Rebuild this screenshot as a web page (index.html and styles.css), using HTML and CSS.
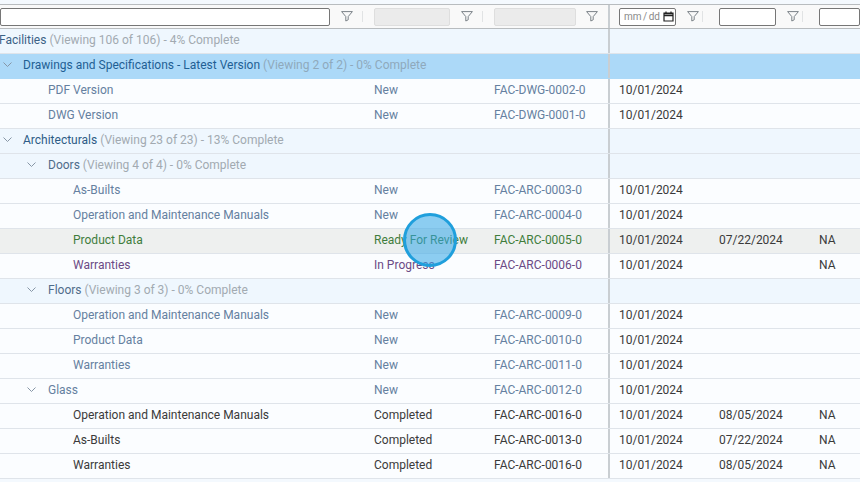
FILE: index.html
```html
<!DOCTYPE html>
<html lang="en">
<head>
<meta charset="utf-8">
<title>Facilities</title>
<link rel="stylesheet" href="styles.css">
</head>
<body>
<svg class="sprites" width="0" height="0" aria-hidden="true">
  <symbol id="funnel" viewBox="0 0 12 11"><path d="M.6.6h10.8L7.2 5.6v3.2L4.8 10V5.6z" fill="none" stroke="#7b8288" stroke-width="1"/></symbol>
  <symbol id="chev" viewBox="0 0 9 5"><path d="M.5.5l4 4 4-4" fill="none" stroke="#8796a6" stroke-width="1"/></symbol>
</svg>
<main class="grid">
  <div class="row filters">
    <div class="fcell c-name"><input class="finput w-name" type="text"><svg class="fn"><use href="#funnel"/></svg><i class="sep"></i></div>
    <div class="fcell c-st"><input class="finput off w-st" type="text" disabled><svg class="fn"><use href="#funnel"/></svg><i class="sep"></i></div>
    <div class="fcell c-doc"><input class="finput off w-doc" type="text" disabled><svg class="fn"><use href="#funnel"/></svg></div>
    <div class="fcell c-date divider"><span class="finput w-date datebox"><span class="mask">mm / dd</span><svg class="cal" viewBox="0 0 11 11"><path d="M1 2h9v8H1zM1 3h9v1.6H1zM3 .5v2M8 .5v2" fill="none" stroke="#222" stroke-width="1.2"/></svg></span><svg class="fn"><use href="#funnel"/></svg><i class="sep"></i></div>
    <div class="fcell c-x"><input class="finput w-x" type="text"><svg class="fn"><use href="#funnel"/></svg><i class="sep"></i></div>
    <div class="fcell c-y"><input class="finput w-y" type="text"></div>
  </div>

  <div class="row group l0"><div class="c-name"><span class="t">Facilities</span> <span class="m">(Viewing 106 of 106) - 4% Complete</span></div><div class="c-st"></div><div class="c-doc"></div><div class="c-date divider"></div><div class="c-x"></div><div class="c-y"></div></div>
  <div class="row group sel l1"><div class="c-name"><svg class="ch"><use href="#chev"/></svg><span class="t">Drawings and Specifications - Latest Version</span> <span class="m">(Viewing 2 of 2) - 0% Complete</span></div><div class="c-st"></div><div class="c-doc"></div><div class="c-date divider"></div><div class="c-x"></div><div class="c-y"></div></div>
  <div class="row leaf new l2"><div class="c-name">PDF Version</div><div class="c-st">New</div><div class="c-doc">FAC-DWG-0002-0</div><div class="c-date divider">10/01/2024</div><div class="c-x"></div><div class="c-y"></div></div>
  <div class="row leaf new l2"><div class="c-name">DWG Version</div><div class="c-st">New</div><div class="c-doc">FAC-DWG-0001-0</div><div class="c-date divider">10/01/2024</div><div class="c-x"></div><div class="c-y"></div></div>

  <div class="row group l1"><div class="c-name"><svg class="ch"><use href="#chev"/></svg><span class="t">Architecturals</span> <span class="m">(Viewing 23 of 23) - 13% Complete</span></div><div class="c-st"></div><div class="c-doc"></div><div class="c-date divider"></div><div class="c-x"></div><div class="c-y"></div></div>
  <div class="row group sub l2"><div class="c-name"><svg class="ch"><use href="#chev"/></svg><span class="t">Doors</span> <span class="m">(Viewing 4 of 4) - 0% Complete</span></div><div class="c-st"></div><div class="c-doc"></div><div class="c-date divider"></div><div class="c-x"></div><div class="c-y"></div></div>
  <div class="row leaf new l3"><div class="c-name">As-Builts</div><div class="c-st">New</div><div class="c-doc">FAC-ARC-0003-0</div><div class="c-date divider">10/01/2024</div><div class="c-x"></div><div class="c-y"></div></div>
  <div class="row leaf new l3"><div class="c-name">Operation and Maintenance Manuals</div><div class="c-st">New</div><div class="c-doc">FAC-ARC-0004-0</div><div class="c-date divider">10/01/2024</div><div class="c-x"></div><div class="c-y"></div></div>
  <div class="row leaf ready l3"><div class="c-name">Product Data</div><div class="c-st">Ready For Review</div><div class="c-doc">FAC-ARC-0005-0</div><div class="c-date divider">10/01/2024</div><div class="c-x">07/22/2024</div><div class="c-y">NA</div></div>
  <div class="row leaf prog l3"><div class="c-name">Warranties</div><div class="c-st">In Progress</div><div class="c-doc">FAC-ARC-0006-0</div><div class="c-date divider">10/01/2024</div><div class="c-x"></div><div class="c-y">NA</div></div>

  <div class="row group sub l2"><div class="c-name"><svg class="ch"><use href="#chev"/></svg><span class="t">Floors</span> <span class="m">(Viewing 3 of 3) - 0% Complete</span></div><div class="c-st"></div><div class="c-doc"></div><div class="c-date divider"></div><div class="c-x"></div><div class="c-y"></div></div>
  <div class="row leaf new l3"><div class="c-name">Operation and Maintenance Manuals</div><div class="c-st">New</div><div class="c-doc">FAC-ARC-0009-0</div><div class="c-date divider">10/01/2024</div><div class="c-x"></div><div class="c-y"></div></div>
  <div class="row leaf new l3"><div class="c-name">Product Data</div><div class="c-st">New</div><div class="c-doc">FAC-ARC-0010-0</div><div class="c-date divider">10/01/2024</div><div class="c-x"></div><div class="c-y"></div></div>
  <div class="row leaf new l3"><div class="c-name">Warranties</div><div class="c-st">New</div><div class="c-doc">FAC-ARC-0011-0</div><div class="c-date divider">10/01/2024</div><div class="c-x"></div><div class="c-y"></div></div>

  <div class="row leaf new l2 glass"><div class="c-name"><svg class="ch"><use href="#chev"/></svg>Glass</div><div class="c-st">New</div><div class="c-doc">FAC-ARC-0012-0</div><div class="c-date divider">10/01/2024</div><div class="c-x"></div><div class="c-y"></div></div>
  <div class="row leaf done l3"><div class="c-name">Operation and Maintenance Manuals</div><div class="c-st">Completed</div><div class="c-doc">FAC-ARC-0016-0</div><div class="c-date divider">10/01/2024</div><div class="c-x">08/05/2024</div><div class="c-y">NA</div></div>
  <div class="row leaf done l3"><div class="c-name">As-Builts</div><div class="c-st">Completed</div><div class="c-doc">FAC-ARC-0013-0</div><div class="c-date divider">10/01/2024</div><div class="c-x">07/22/2024</div><div class="c-y">NA</div></div>
  <div class="row leaf done l3"><div class="c-name">Warranties</div><div class="c-st">Completed</div><div class="c-doc">FAC-ARC-0016-0</div><div class="c-date divider">10/01/2024</div><div class="c-x">08/05/2024</div><div class="c-y">NA</div></div>
</main>
<div class="pointer"></div>
</body>
</html>
```
FILE: styles.css
```css
html, body { margin: 0; padding: 0; }
body {
  width: 860px;
  height: 482px;
  overflow: hidden;
  background: #f4f9fe;
  font-family: Roboto, "Liberation Sans", sans-serif;
  font-size: 12px;
  position: relative;
}
.sprites { position: absolute; }
.grid { padding-top: 4px; height: 478px; overflow: hidden; }
.row {
  display: grid;
  grid-template-columns: 369px 120px 119px 101px 100px 51px;
  width: 860px;
  height: 25px;
  box-sizing: border-box;
  border-bottom: 1px solid #dfe4ea;
  line-height: 22px;
}
.row > div { box-sizing: border-box; white-space: nowrap; }
.c-st, .c-doc { padding-left: 5px; }
.c-date, .c-x, .c-y { padding-left: 10px; }
.divider { border-left: 2px solid #c9ced2; padding-left: 9px; }

/* filter row */
.filters {
  border-top: 1px solid #b8bcbf;
  border-bottom: 1px solid #b8bcbf;
  background: #f9f9f9;
}
.row > .fcell { display: flex; align-items: center; position: relative; }
.finput {
  box-sizing: border-box;
  height: 18px;
  border: 1px solid #767676;
  border-radius: 2px;
  background: #fff;
  padding: 0;
  margin: 0;
  display: block;
  flex: none;
}
.off { background: #ebebeb; border-color: #dedede; }
.w-name { width: 330px; }
.w-st { width: 76px; }
.w-doc { width: 82px; }
.w-date { width: 57px; }
.w-x { width: 57px; }
.w-y { width: 41px; }
.fn { width: 12px; height: 11px; flex: none; position: absolute; top: 6px; }
.c-name .fn { left: 341px; }
.c-st .fn { left: 92px; }
.c-doc .fn { left: 97px; }
.c-date .fn { left: 77px; }
.c-x .fn { left: 78px; }
.sep { position: absolute; right: 6px; top: 6px; width: 1px; height: 11px; background: #e1e3e4; }
.datebox { display: flex; align-items: center; justify-content: space-between; padding: 0 1px 0 4px; }
.mask { color: #8a8a8a; font-size: 10px; white-space: nowrap; line-height: 16px; word-spacing: -1px; }
.cal { width: 11px; height: 11px; flex: none; }

/* rows */
.group { background: #eff7fe; color: #2d5c86; }
.sel { background: #acd9f8; border-bottom-color: #acd9f8; color: #1f5f94; }
.sub .t { color: #4f6c8a; }
.m { color: #a2aab1; }
.sel .m { color: #8fa9bc; }
.l0 .t { color: #3b6286; }
.l0 .c-name { text-indent: -1px; }
.l1 .c-name { padding-left: 23px; }
.l2 .c-name { padding-left: 48px; }
.l3 .c-name { padding-left: 73px; }
.c-name { position: relative; }
.ch { position: absolute; width: 9px; height: 5px; top: 8px; }
.l1 .ch { left: 3px; }
.l2 .ch { left: 27px; }

.leaf { background: #fbfdff; }
.new { color: #6580a0; }
.ready { color: #3f7d3c; background: #eef0ef; }
.prog { color: #6b4a85; }
.done { color: #3a3a3a; }
.row.leaf .c-date, .row.leaf .c-x, .row.leaf .c-y { color: #3a3a3a; }

/* click highlight from the recording */
.pointer {
  position: absolute;
  left: 403px;
  top: 213px;
  width: 54px;
  height: 54px;
  box-sizing: border-box;
  border: 3px solid #1f9fdc;
  border-radius: 50%;
  background: rgba(50, 165, 230, 0.55);
}
```
